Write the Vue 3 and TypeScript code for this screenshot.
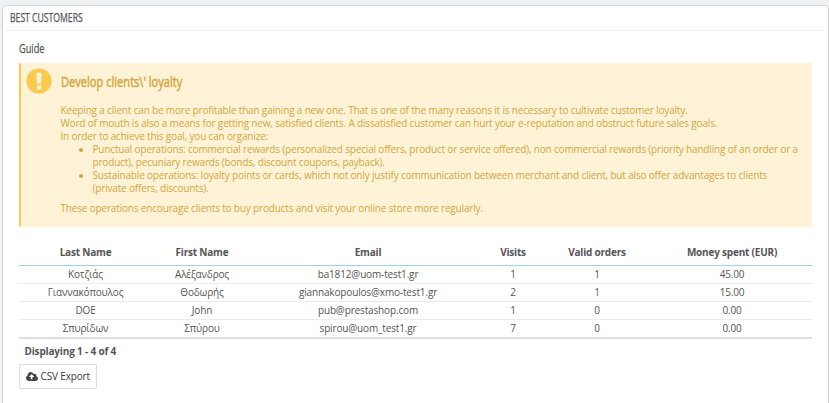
<script setup lang="ts">
interface Customer {
  last: string
  first: string
  email: string
  visits: number
  orders: number
  spent: string
}

const columns: string[] = ['Last Name', 'First Name', 'Email', 'Visits', 'Valid orders', 'Money spent (EUR)']

const customers: Customer[] = [
  { last: 'Κοτζιάς', first: 'Αλέξανδρος', email: 'ba1812@uom-test1.gr', visits: 1, orders: 1, spent: '45.00' },
  { last: 'Γιαννακόπουλος', first: 'Θοδωρής', email: 'giannakopoulos@xmo-test1.gr', visits: 2, orders: 1, spent: '15.00' },
  { last: 'DOE', first: 'John', email: 'pub@prestashop.com', visits: 1, orders: 0, spent: '0.00' },
  { last: 'Σπυρίδων', first: 'Σπύρου', email: 'spirou@uom_test1.gr', visits: 7, orders: 0, spent: '0.00' },
]
</script>

<template>
  <main class="page">
    <section class="panel">
      <h3 class="panel-title"><span>BEST CUSTOMERS</span></h3>
      <div class="content">
        <h4 class="guide"><span>Guide</span></h4>
        <div class="alert">
          <svg class="alert-icon" viewBox="0 0 26 26" aria-hidden="true">
            <circle cx="13" cy="13" r="12.6" fill="#fcc94f" />
            <path d="M10.4 4.8h5.2l-.5 11h-4.2zM10.8 17.4h4.4v4h-4.4z" fill="#fff3d7" />
          </svg>
          <div class="alert-body">
            <h4 class="alert-title"><span>Develop clients\' loyalty</span></h4>
            <p>
              Keeping a client can be more profitable than gaining a new one. That is one of the many reasons it is necessary to cultivate customer loyalty.<br />
              Word of mouth is also a means for getting new, satisfied clients. A dissatisfied customer can hurt your e-reputation and obstruct future sales goals.<br />
              In order to achieve this goal, you can organize:
            </p>
            <ul>
              <li>Punctual operations: commercial rewards (personalized special offers, product or service offered), non commercial rewards (priority handling of an order or a<br />product), pecuniary rewards (bonds, discount coupons, payback).</li>
              <li>Sustainable operations: loyalty points or cards, which not only justify communication between merchant and client, but also offer advantages to clients<br />(private offers, discounts).</li>
            </ul>
            <p>These operations encourage clients to buy products and visit your online store more regularly.</p>
          </div>
        </div>
        <table>
          <colgroup>
            <col class="c-last" /><col class="c-first" /><col class="c-email" /><col class="c-visits" /><col class="c-orders" /><col />
          </colgroup>
          <thead>
            <tr><th v-for="c in columns" :key="c">{{ c }}</th></tr>
          </thead>
          <tbody>
            <tr v-for="c in customers" :key="c.email">
              <td>{{ c.last }}</td>
              <td>{{ c.first }}</td>
              <td>{{ c.email }}</td>
              <td>{{ c.visits }}</td>
              <td>{{ c.orders }}</td>
              <td>{{ c.spent }}</td>
            </tr>
          </tbody>
        </table>
        <div class="count">Displaying 1 - 4 of 4</div>
        <button class="export" type="button">
          <svg viewBox="0 0 1920 1408" aria-hidden="true">
            <path fill="#444" fill-rule="evenodd" d="M1280 736q0-14-9-23L919 361q-9-9-23-9t-23 9L522 712q-10 12-10 24 0 14 9 23t23 9h224v352q0 13 9.500 22.500T800 1152h192q13 0 22.500-9.500t9.500-22.500V768h224q13 0 22.500-9.500T1280 736zM1920 1024q0 159-112.500 271.500T1536 1408H448q-185 0-316.500-131.500T0 960q0-130 70-240t188-165q-2-30-2-43 0-212 150-362T768 0q156 0 285.500 87T1242 318q71-62 166-62 106 0 181 75t75 181q0 76-41 138 130 31 213.500 135.500T1920 1024z" />
          </svg>
          <span>CSV Export</span>
        </button>
      </div>
    </section>
  </main>
</template>

<style>
body {
  margin: 0;
  overflow: hidden;
  background: #eff1f2;
}
</style>

<style scoped>
.page {
  box-sizing: border-box;
  height: 403px;
  padding: 5px 0 0 2px;
  overflow: hidden;
  font: 10px/13px "Open Sans", sans-serif;
  color: #555;
}
.panel {
  box-sizing: border-box;
  width: 827px;
  height: 420px;
  padding: 0 3px;
  background: #fff;
  border: 1px solid #d3d8db;
  border-radius: 4px;
}
.panel-title,
.guide,
.alert-title {
  margin: 0;
  font-weight: 400;
  white-space: nowrap;
  letter-spacing: 0;
}
.panel-title span,
.guide span,
.alert-title span {
  display: inline-block;
  transform-origin: left center;
}
.panel-title {
  box-sizing: border-box;
  height: 25px;
  padding-left: 4px;
  border-bottom: 1px solid #eee;
  font-size: 12px;
  line-height: 24px;
}
.panel-title span {
  transform: scaleX(0.72);
  -webkit-text-stroke: 0.25px;
}
.content {
  padding: 0 13px;
}
.guide {
  height: 32px;
  font-size: 13px;
  line-height: 35px;
}
.guide span {
  transform: scaleX(0.71);
  -webkit-text-stroke: 0.25px;
}
.alert {
  box-sizing: border-box;
  display: flex;
  width: 793px;
  height: 164px;
  padding: 5px 0 0 5px;
  background: #fff3d7;
  border-left: 2px solid #fcc94f;
  border-radius: 2px;
  color: #d2a63c;
  letter-spacing: -0.172px;
}
.alert-icon {
  flex: none;
  width: 26px;
  height: 26px;
}
.alert-body {
  padding-left: 8.500px;
  white-space: nowrap;
}
.alert-title {
  height: 36px;
  font-size: 14.5px;
  line-height: 28px;
}
.alert-title span {
  transform: scaleX(0.765);
  -webkit-text-stroke: 0.45px;
}
.alert p {
  margin: 0;
}
.alert ul {
  margin: 0 0 7px;
  padding-left: 32px;
}
table {
  width: 793px;
  margin-top: 13px;
  table-layout: fixed;
  border-collapse: separate;
  border-spacing: 0;
  border-bottom: 1px solid #ddd;
  text-align: center;
  letter-spacing: -0.15px;
}
.c-last { width: 133px; }
.c-first { width: 100px; }
.c-email { width: 232px; }
.c-visits { width: 58px; }
.c-orders { width: 110px; }
th {
  box-sizing: border-box;
  height: 26px;
  padding: 0;
  border-bottom: 1px solid #a0d0eb;
  font-weight: 700;
  letter-spacing: -0.2px;
}
td {
  box-sizing: border-box;
  height: 18px;
  padding: 0;
  border-bottom: 1px solid #eaedef;
}
tbody tr:last-child td {
  border-bottom-color: #ddd;
}
.count {
  margin: 6px 0 6px 5.500px;
  font-weight: 700;
  letter-spacing: -0.17px;
}
.export {
  box-sizing: border-box;
  display: flex;
  align-items: center;
  gap: 2.5px;
  width: 78px;
  height: 25px;
  padding: 0 0 0 6px;
  background: #fff;
  border: 1px solid #ddd;
  border-radius: 2px;
  color: #363a41;
  font: 10px/13px "Open Sans", sans-serif;
  letter-spacing: -0.15px;
  white-space: nowrap;
}
.export svg {
  width: 12px;
  height: 9px;
}
</style>
